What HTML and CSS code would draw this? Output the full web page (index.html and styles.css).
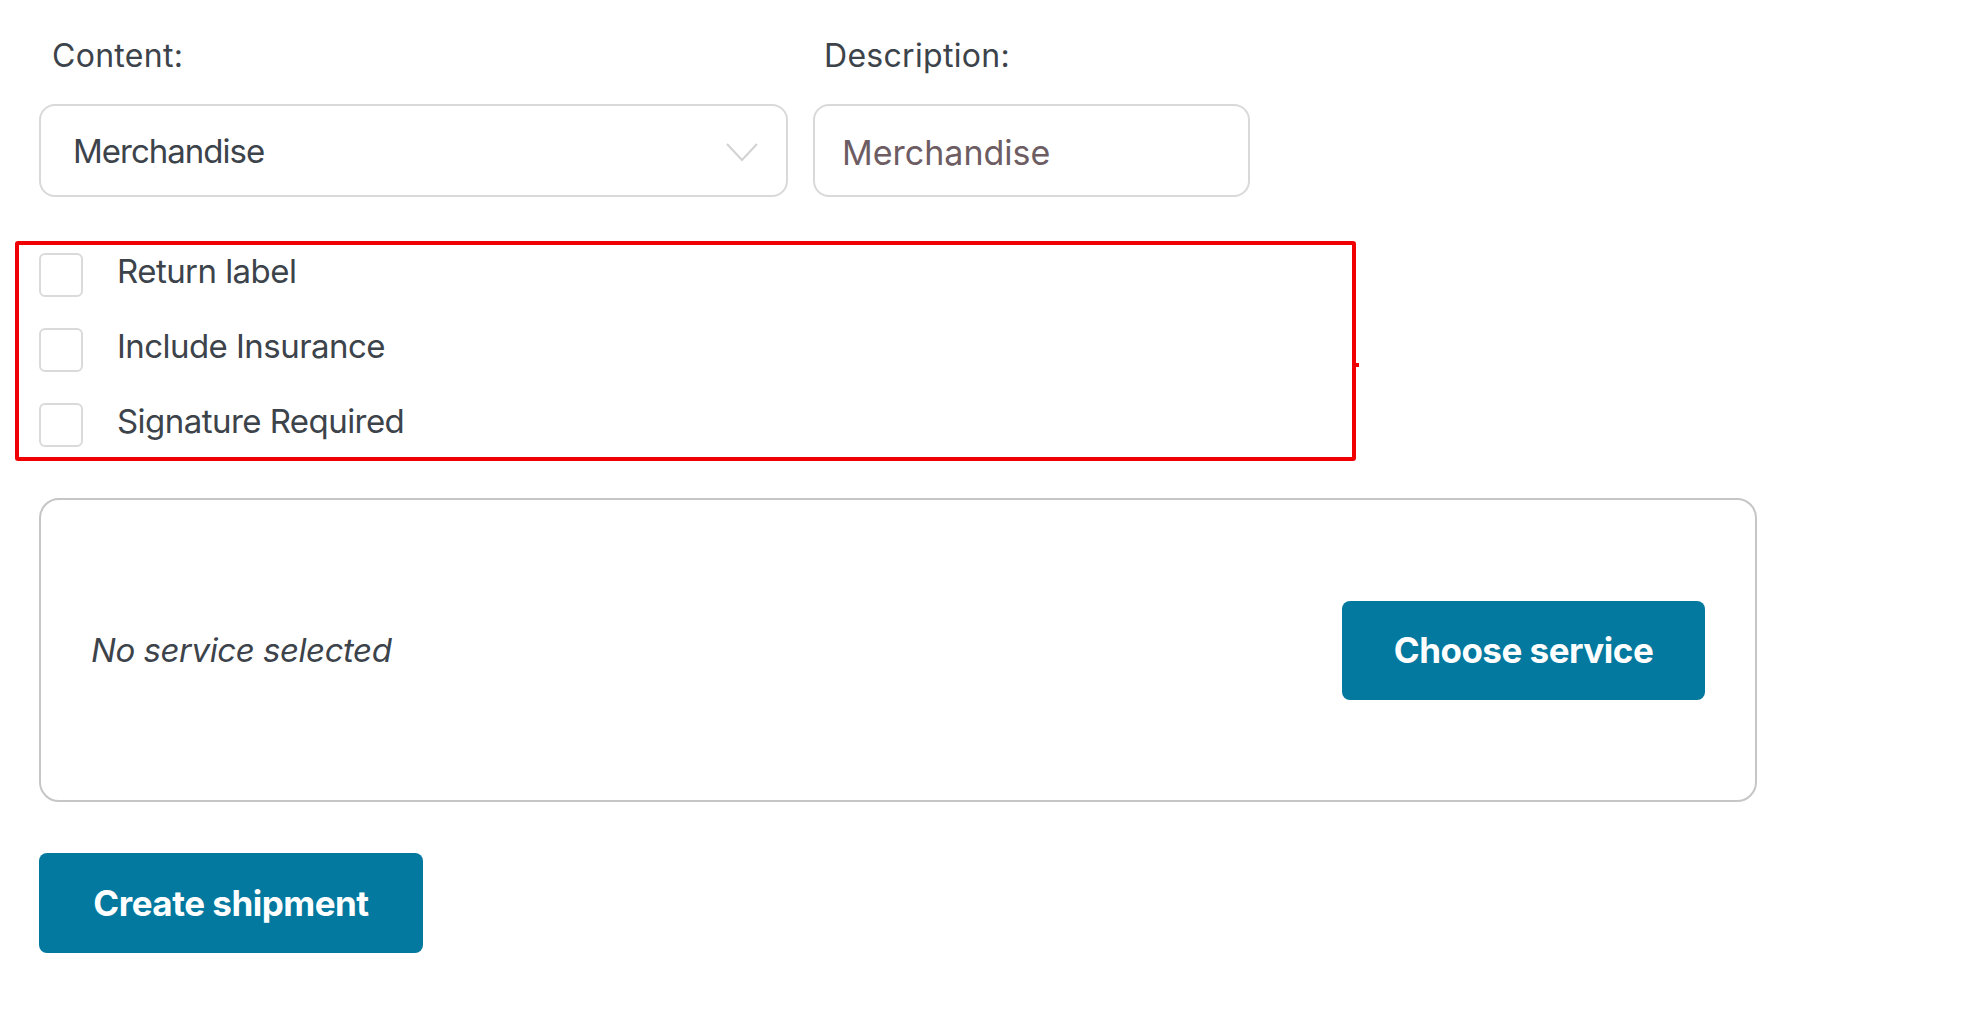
FILE: index.html
```html
<!DOCTYPE html>
<html lang="en">
<head>
<meta charset="utf-8">
<title>Create shipment</title>
<link rel="stylesheet" href="styles.css">
</head>
<body>
<div class="page">
  <div class="fields">
    <div class="field field-content">
      <label class="field-label" for="content">Content:</label>
      <div class="select" id="content">
        <span class="select-value">Merchandise</span>
        <svg class="chevron" width="32" height="19" viewBox="0 0 32 19" aria-hidden="true">
          <path d="M1 1 L16 17 L31 1" fill="none" stroke="#d2d2d2" stroke-width="2"/>
        </svg>
      </div>
    </div>
    <div class="field field-desc">
      <label class="field-label" for="desc">Description:</label>
      <div class="input" id="desc"><span class="input-value">Merchandise</span></div>
    </div>
  </div>

  <div class="options">
    <label class="option"><span class="checkbox"></span><span class="option-text">Return label</span></label>
    <label class="option"><span class="checkbox"></span><span class="option-text">Include Insurance</span></label>
    <label class="option"><span class="checkbox"></span><span class="option-text">Signature Required</span></label>
  </div>

  <div class="service">
    <span class="service-empty">No service selected</span>
    <button class="btn btn-choose" type="button">Choose service</button>
  </div>

  <div class="actions">
    <button class="btn btn-create" type="button">Create shipment</button>
  </div>
</div>
</body>
</html>
```

FILE: styles.css
```css
* { box-sizing: border-box; }

html, body {
  margin: 0;
  padding: 0;
  background: #ffffff;
}

body {
  font-family: Inter, "Noto Sans", "Liberation Sans", sans-serif;
  color: #3c434a;
}

.page {
  padding: 37px 0 40px 15px;
}

.fields {
  display: flex;
  gap: 25px;
  padding-left: 24px;
}

.field {
  display: flex;
  flex-direction: column;
}

.field-content { width: 749px; }
.field-desc { width: 437px; }

.field-label {
  font-size: 32px;
  line-height: 37px;
  letter-spacing: 0.3px;
  padding-left: 13px;
  margin-bottom: 30px;
  color: #3c434a;
}

.field-desc .field-label { padding-left: 11px; }

.select,
.input {
  height: 93px;
  border: 2px solid #d9d9d9;
  border-radius: 16px;
  display: flex;
  align-items: center;
  background: #fff;
}

.select {
  justify-content: space-between;
  padding: 0 28px 0 32px;
}

.select-value {
  font-size: 33px;
  letter-spacing: -1px;
  color: #3c434a;
}

.chevron { display: block; margin-top: 3px; }

.input {
  padding: 3px 0 0 27px;
}

.input-value {
  font-size: 34px;
  letter-spacing: 0;
  color: #6d5d63;
}

.options {
  position: relative;
  width: 1341px;
  margin-top: 44px;
  border: 4px solid #f00000;
  border-radius: 3px;
  padding: 8px 20px 10px;
  display: flex;
  flex-direction: column;
  gap: 31px;
}

.options::after {
  content: "";
  position: absolute;
  right: -7px;
  top: 118px;
  width: 3px;
  height: 4px;
  background: #f00000;
}

.option {
  display: flex;
  align-items: center;
  gap: 34px;
  height: 44px;
}

.checkbox {
  width: 44px;
  height: 44px;
  border: 2px solid #dadada;
  border-radius: 6px;
  background: #fff;
  flex: none;
}

.option-text {
  font-size: 33px;
  letter-spacing: -0.55px;
  padding-bottom: 8px;
  color: #3c434a;
}

.service {
  margin: 37px 0 0 24px;
  width: 1718px;
  height: 304px;
  border: 2px solid #c6c6c6;
  border-radius: 20px;
  display: flex;
  align-items: center;
  justify-content: space-between;
  padding: 0 50px 0 50px;
}

.service-empty {
  font-size: 33px;
  font-style: italic;
  letter-spacing: -0.45px;
  color: #3c434a;
}

.btn {
  font-family: Inter, "Noto Sans", "Liberation Sans", sans-serif;
  font-weight: 700;
  font-size: 35px;
  letter-spacing: -0.5px;
  color: #ffffff;
  background: #03799f;
  border: none;
  border-radius: 8px;
  cursor: pointer;
  display: flex;
  align-items: center;
  justify-content: center;
}

.btn-choose {
  width: 363px;
  height: 99px;
}

.actions {
  margin: 51px 0 0 24px;
}

.btn-create {
  width: 384px;
  height: 100px;
}
```
